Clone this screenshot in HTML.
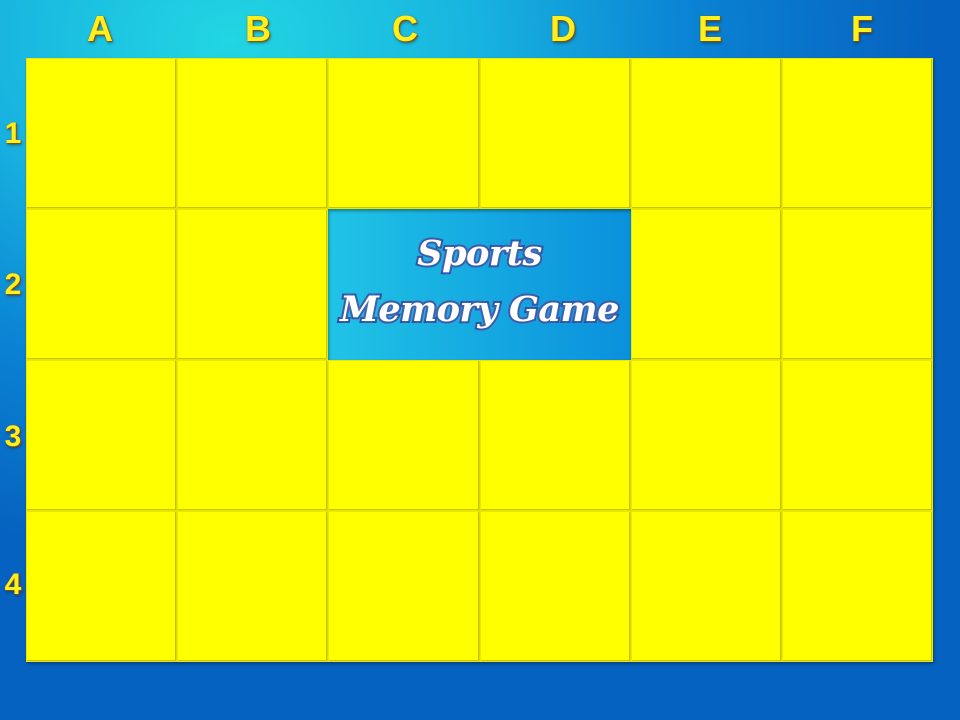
<!DOCTYPE html>
<html><head><meta charset="utf-8"><style>
html,body{margin:0;padding:0}
body{width:960px;height:720px;overflow:hidden;position:relative;
background:radial-gradient(ellipse 700px 520px at 230px 40px,#22d6e2 0%,#18b4e0 35%,#0a84d4 65%,#0662c0 100%);
font-family:"Liberation Sans",sans-serif}
.t{position:absolute;width:149px;height:149px;background:#ffff00;
box-shadow:inset 0 0 0 1px #e8e800,inset -2px -2px 0 #c9c400,1px 2px 3px rgba(0,0,0,.35)}
.h{position:absolute;color:#ffef1a;font-weight:bold;font-size:36px;
text-shadow:0 0 1px #a05a10,1px 1px 1px #8a4a00,1px 2px 3px rgba(0,0,0,.4);text-align:center}
.r{font-size:30px}
.c{position:absolute;left:328px;top:209px;width:303px;height:151px;
background:linear-gradient(90deg,#20c4e6,#0a90dc)}
.title{position:absolute;left:318px;top:226px;width:323px;text-align:center;
font-family:"DejaVu Serif",serif;font-style:italic;font-weight:bold;font-size:35px;line-height:56px;color:#fff;
-webkit-text-stroke:4px #2a4c98;paint-order:stroke fill;text-shadow:0 0 4px #6a8ad8;letter-spacing:-0.5px}
</style></head><body>
<div class="h" style="left:80px;top:8px;width:40px">A</div>
<div class="h" style="left:238px;top:8px;width:40px">B</div>
<div class="h" style="left:385px;top:8px;width:40px">C</div>
<div class="h" style="left:543px;top:8px;width:40px">D</div>
<div class="h" style="left:690px;top:8px;width:40px">E</div>
<div class="h" style="left:842px;top:8px;width:40px">F</div>
<div class="h r" style="left:0;top:117px;width:26px">1</div>
<div class="h r" style="left:0;top:268px;width:26px">2</div>
<div class="h r" style="left:0;top:420px;width:26px">3</div>
<div class="h r" style="left:0;top:568px;width:26px">4</div>
<div class="c"></div>
<div class="title">Sports<br>Memory Game</div>
<div id="g"></div>
<script>
var xs=[26,177,328,480,631,782],ys=[58,209,360,511],h='';
for(var r=0;r<4;r++)for(var c=0;c<6;c++){if(r==1&&(c==2||c==3))continue;
h+='<div class="t" style="left:'+xs[c]+'px;top:'+ys[r]+'px;width:'+((c<5?xs[c+1]:933)-xs[c])+'px;height:151px"></div>';}
document.getElementById('g').innerHTML=h;
</script>
</body></html>
